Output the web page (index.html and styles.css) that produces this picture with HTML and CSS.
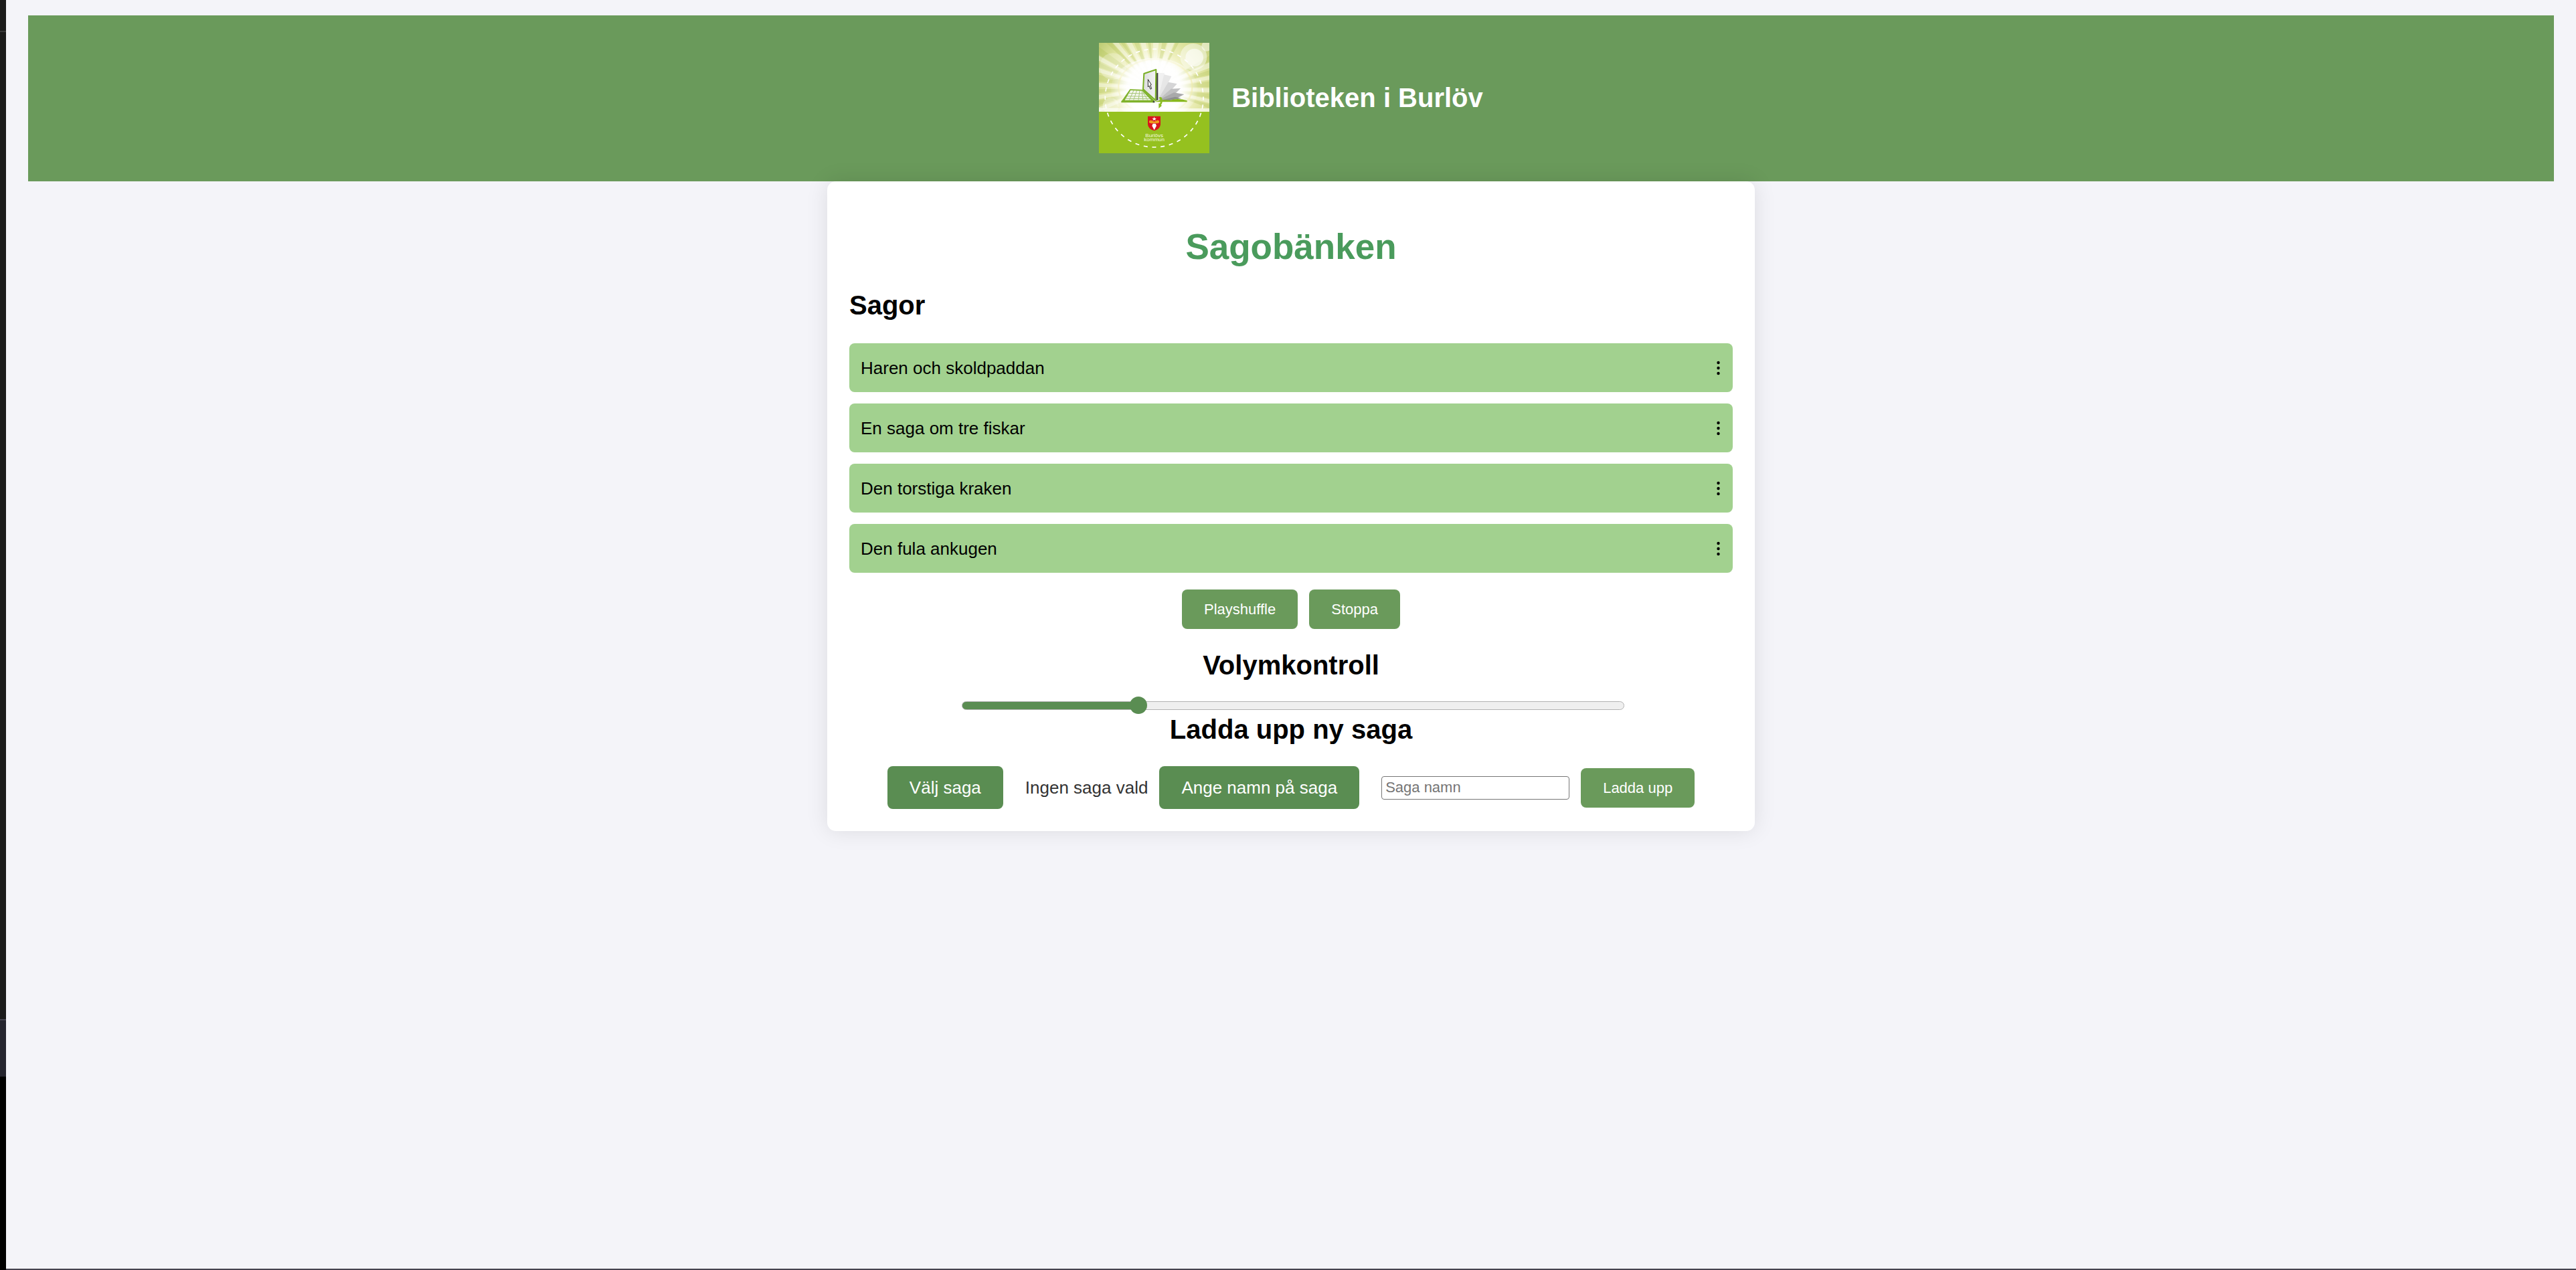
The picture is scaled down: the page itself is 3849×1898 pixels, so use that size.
FILE: index.html
```html
<!DOCTYPE html>
<html lang="sv">
<head>
  <meta charset="utf-8">
  <meta name="viewport" content="width=device-width, initial-scale=1">
  <title>Sagobänken</title>
  <link rel="stylesheet" href="styles.css">
</head>
<body>
  <div class="edge" aria-hidden="true">
    <div class="edge-top"></div>
    <div class="edge-middle"></div>
    <div class="edge-panel"></div>
    <div class="edge-bottom"></div>
  </div>
  <div class="page">
    <header class="site-header">
      <svg class="logo" viewBox="42 42 495 495" role="img" aria-label="Burlövs kommun">
        <defs>
          <radialGradient id="sky" gradientUnits="userSpaceOnUse" cx="290" cy="245" r="320">
            <stop offset="0" stop-color="#ffffff"/>
            <stop offset=".36" stop-color="#fdfdf0"/>
            <stop offset=".52" stop-color="#eff0c0"/>
            <stop offset=".75" stop-color="#dce29a"/>
            <stop offset="1" stop-color="#bccb72"/>
          </radialGradient>
          <radialGradient id="glow" gradientUnits="userSpaceOnUse" cx="290" cy="250" r="200">
            <stop offset="0" stop-color="#fff"/>
            <stop offset=".6" stop-color="#fff" stop-opacity=".95"/>
            <stop offset="1" stop-color="#fff" stop-opacity="0"/>
          </radialGradient>
          <linearGradient id="screen" x1="0" x2="1">
            <stop offset="0" stop-color="#dcdddd"/>
            <stop offset="1" stop-color="#f4f4f4"/>
          </linearGradient>
          <clipPath id="sky-area"><path d="M42 42H537V351H42Z"/></clipPath>
        </defs>
        <path d="M42 42H537V537H42Z" fill="#95c11f"/>
        <g clip-path="url(#sky-area)">
          <path d="M42 42H537V351H42Z" fill="url(#sky)"/>
          <g fill="#aabf4c" opacity=".26">
            <path d="M290 245L42 60V95ZM290 245L42 130V150ZM290 245L42 185V215ZM290 245L42 250V268ZM290 245L42 300V322Z"/>
            <path d="M290 245L75 42H100ZM290 245L140 42H158ZM290 245L200 42H222ZM290 245L262 42H275ZM290 245L325 42H345ZM290 245L385 42H400Z"/>
            <path d="M290 245L537 100V125ZM290 245L537 165V185ZM290 245L537 215V240ZM290 245L537 270V290ZM290 245L537 318V335Z"/>
          </g>
          <g fill="#fff" opacity=".42">
            <path d="M290 245L42 100V122ZM290 245L42 155V175ZM290 245L42 222V240ZM290 245L42 275V295ZM290 245L42 330V351Z"/>
            <path d="M290 245L104 42H130ZM290 245L165 42H190ZM290 245L228 42H252ZM290 245L285 42H310ZM290 245L350 42H380Z"/>
            <path d="M290 245L537 130V155ZM290 245L537 190V208ZM290 245L537 245V264ZM290 245L537 295V312Z"/>
          </g>
          <ellipse cx="295" cy="240" rx="165" ry="125" fill="none" stroke="#e9e27a" stroke-width="7" opacity=".55"/>
          <ellipse cx="290" cy="250" rx="195" ry="140" fill="url(#glow)"/>
          <g fill="#fff">
            <circle cx="466" cy="105" r="60" opacity=".45"/>
            <circle cx="470" cy="108" r="40" opacity=".6"/>
            <circle cx="525" cy="57" r="23" opacity=".5"/>
            <circle cx="105" cy="148" r="60" opacity=".25"/>
            <circle cx="95" cy="325" r="36" opacity=".35"/>
          </g>
          <path d="M42 334L537 336V351H42Z" fill="#fff" opacity=".65"/>
        </g>
        <circle cx="290" cy="290" r="220" fill="none" stroke="#fff" stroke-width="5" stroke-dasharray="18 20.4" stroke-dashoffset="9"/>
        <path d="M305 176L336 178L330 220L306 296Z" fill="#f1f1f1"/>
        <path d="M306 296L334 184L367 192L344 238Z" fill="#e7e7e7"/>
        <path d="M306 297L353 218L392 226L368 252Z" fill="#d5d5d6"/>
        <path d="M306 299L366 248L408 246L384 270Z" fill="#c0c0c1"/>
        <path d="M306 301L378 265L424 273L392 290Z" fill="#a9a9aa"/>
        <path d="M306 303L384 284L412 291L360 300Z" fill="#8d8e8f"/>
        <path d="M292 306Q325 294 360 300Q395 288 437 301V307H292Z" fill="#88b81d"/>
        <path d="M146 300L181 250L240 252L290 300V310H142V303Z" fill="#7fb22b"/>
        <path d="M158 299L184 255L236 257L276 299Z" fill="#f4f6ee"/>
        <path d="M176 268L248 270M168 281L260 283M160 292L269 293M198 255L178 299M212 255L197 299M225 256L219 299M234 257L240 299M238 260L260 299" fill="none" stroke="#a8c87a" stroke-width="3"/>
        <path d="M299 178L307 177V298L299 302Z" fill="#454545"/>
        <path d="M244 180L298 162L296 300L240 250Z" fill="url(#screen)" stroke="#79af24" stroke-width="6" stroke-linejoin="round"/>
        <path d="M262 206V240L267 235L273 250L278 247L272 232L277 230Z" fill="#fff" stroke="#282828" stroke-width="3"/>
        <path d="M284 302H292V310H284Z" fill="#414a3b"/>
        <path d="M310 287Q326 280 326 299Q327 314 320 320L324 324L310 336V313L315 315Q322 300 310 287Z" fill="#8abd22"/>
        <path d="M261 371H318V408Q316 429 290 436Q263 429 261 408Z" fill="#d9141d"/>
        <path d="M290 373L292 380H300L294 385L297 391L290 387L283 391L286 385L280 380H288Z" fill="#fff"/>
        <path d="M267 392Q275 387 283 392L290 395L297 392Q305 387 312 392V400Q304 405 296 402H284Q275 405 267 400Z" fill="#ef9c1d"/>
        <path d="M284 404H296L300 414L290 433L280 414Z" fill="#fff"/>
        <g class="logo-text" text-anchor="middle">
          <text x="290" y="464">Burlövs</text>
          <text x="290" y="483">kommun</text>
        </g>
      </svg>
      <h2 class="site-name">Biblioteken i Burlöv</h2>
    </header>

    <main class="card">
      <h1 class="card-title">Sagobänken</h1>
      <h2 class="section-title section-title-start">Sagor</h2>
      <ul class="story-list">
        <li class="story">
          <span>Haren och skoldpaddan</span>
          <button class="story-menu" type="button" aria-label="Alternativ för Haren och skoldpaddan"><svg class="dots" viewBox="0 0 9 22"><circle cx="4.5" cy="3" r="2.2"/><circle cx="4.5" cy="11" r="2.2"/><circle cx="4.5" cy="19" r="2.2"/></svg></button>
        </li>
        <li class="story">
          <span>En saga om tre fiskar</span>
          <button class="story-menu" type="button" aria-label="Alternativ för En saga om tre fiskar"><svg class="dots" viewBox="0 0 9 22"><circle cx="4.5" cy="3" r="2.2"/><circle cx="4.5" cy="11" r="2.2"/><circle cx="4.5" cy="19" r="2.2"/></svg></button>
        </li>
        <li class="story">
          <span>Den torstiga kraken</span>
          <button class="story-menu" type="button" aria-label="Alternativ för Den torstiga kraken"><svg class="dots" viewBox="0 0 9 22"><circle cx="4.5" cy="3" r="2.2"/><circle cx="4.5" cy="11" r="2.2"/><circle cx="4.5" cy="19" r="2.2"/></svg></button>
        </li>
        <li class="story">
          <span>Den fula ankugen</span>
          <button class="story-menu" type="button" aria-label="Alternativ för Den fula ankugen"><svg class="dots" viewBox="0 0 9 22"><circle cx="4.5" cy="3" r="2.2"/><circle cx="4.5" cy="11" r="2.2"/><circle cx="4.5" cy="19" r="2.2"/></svg></button>
        </li>
      </ul>
      <div class="controls">
        <button class="btn" type="button">Playshuffle</button>
        <button class="btn" type="button">Stoppa</button>
      </div>
      <h2 class="section-title"><label for="volume">Volymkontroll</label></h2>
      <input class="volume" id="volume" type="range" min="0" max="100" value="26" style="--level: 26%">
      <h2 class="section-title">Ladda upp ny saga</h2>
      <form class="upload">
        <div class="upload-group">
          <button class="btn-large" type="button">Välj saga</button>
          <span class="file-status">Ingen saga vald</span>
        </div>
        <div class="upload-group">
          <label class="btn-large" for="story-name">Ange namn på saga</label>
          <input class="story-name" id="story-name" type="text" placeholder="Saga namn">
        </div>
        <button class="btn" type="button">Ladda upp</button>
      </form>
    </main>
  </div>
</body>
</html>
```
FILE: styles.css
```css
* {
  box-sizing: border-box;
}

body {
  margin: 0;
  min-height: 100vh;
  display: flex;
  background: #f4f4f9;
  color: #000;
  font-family: Arial, "Liberation Sans", sans-serif;
  font-size: 26px;
  line-height: 30px;
}

h1,
h2,
ul {
  margin: 0;
  padding: 0;
}

button,
input {
  font-family: inherit;
}

/* Dark strip along the left side of the window */
.edge {
  flex: none;
  width: 9px;
  display: flex;
  flex-direction: column;
  background: #000;
}

.edge-top {
  flex: 46;
  background: #1b1b1b;
  border-bottom: 2px solid #393939;
}

.edge-middle {
  flex: 1478;
  background: #1b1b1b;
}

.edge-panel {
  flex: 84;
  background: #25252f;
  border-top: 2px solid #45444f;
}

.edge-bottom {
  flex: 290;
}

.page {
  flex: 1;
  min-width: 0;
  padding: 23px 33px;
  border-bottom: 2px solid #45434f;
}

.site-header {
  display: flex;
  align-items: center;
  justify-content: center;
  gap: 33px;
  padding: 41px 33px 42px;
  background: #6a9a5b;
  color: #fff;
}

.logo {
  display: block;
  width: 165px;
  height: 165px;
}

.logo-text {
  fill: #f3f8df;
  font-size: 24px;
}

.site-name,
.section-title {
  font-size: 40px;
  line-height: 46px;
}

.site-name {
  padding-bottom: 2px;
}

.card {
  max-width: 1386px;
  margin: 0 auto;
  padding: 33px;
  display: flex;
  flex-direction: column;
  align-items: center;
  background: #fff;
  border-radius: 13px;
  box-shadow: 0 0 33px rgba(0, 0, 0, .1);
}

.card-title {
  margin: 34px 0;
  color: #4a9b5c;
  font-size: 53px;
  line-height: 61px;
}

.section-title-start {
  align-self: flex-start;
}

.story-list {
  width: 100%;
  margin: 34px 0 25px;
  display: flex;
  flex-direction: column;
  gap: 17px;
  list-style: none;
}

.story {
  display: flex;
  align-items: center;
  justify-content: space-between;
  min-height: 73px;
  padding: 0 17px;
  background: #a2d18f;
  border-radius: 8px;
}

.story-menu {
  display: block;
  padding: 0;
  border: 0;
  background: none;
  cursor: pointer;
}

.dots {
  display: block;
  width: 9px;
  height: 22px;
}

.controls {
  display: flex;
  gap: 17px;
  margin-bottom: 31px;
}

.btn,
.btn-large {
  border: 0;
  border-radius: 8px;
  color: #fff;
  cursor: pointer;
}

.btn {
  padding: 17px 33px;
  background: #6a9a5b;
  font-size: 22px;
  line-height: 25px;
}

.btn-large {
  padding: 17px 33px;
  background: #5a8d52;
  font-size: 26px;
  line-height: 30px;
}

.volume {
  appearance: none;
  width: 75%;
  height: 26px;
  margin: 24px 0 0 6px;
  background: none;
}

.volume::-webkit-slider-runnable-track {
  height: 13px;
  border: 1px solid #b2b2b2;
  border-radius: 7px;
  background: linear-gradient(to right, #5a8d52 var(--level), #efefef var(--level));
}

.volume::-webkit-slider-thumb {
  appearance: none;
  width: 26px;
  height: 26px;
  margin-top: -8px;
  border-radius: 50%;
  background: #5a8d52;
}

.upload {
  display: flex;
  align-items: center;
  gap: 17px;
  margin-top: 32px;
}

.upload-group {
  display: flex;
  align-items: center;
  gap: 33px;
}

.file-status {
  color: #333;
}

.story-name {
  width: 281px;
  height: 35px;
  padding: 2px 5px;
  border: 1px solid #767676;
  border-radius: 4px;
  background: #fff;
  font-size: 22px;
}

.story-name::placeholder {
  color: #757575;
}
```
